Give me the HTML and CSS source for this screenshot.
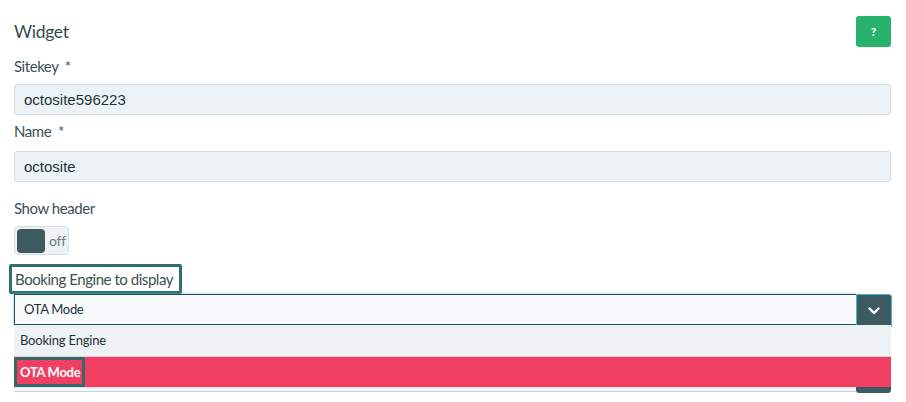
FILE: index.html
```html
<!DOCTYPE html>
<html>
<head>
<meta charset="utf-8">
<link rel="stylesheet" href="styles.css">
</head>
<body>
<div class="page">
  <div class="head">
    <h2 class="title">Widget</h2>
    <button class="help">?</button>
  </div>

  <div class="field f-site">
    <label class="label">Sitekey&nbsp; *</label>
    <div class="input">octosite596223</div>
  </div>

  <div class="field f-name">
    <label class="label">Name&nbsp; *</label>
    <div class="input">octosite</div>
  </div>

  <div class="field f-header">
    <label class="label">Show header</label>
    <div class="toggle"><span class="knob"></span><span class="toggle-text">off</span></div>
  </div>

  <div class="field f-engine">
    <label class="label focus-box">Booking Engine to display</label>
    <div class="select-wrap">
      <div class="select">
        <span class="select-value">OTA Mode</span>
        <span class="caret">
          <svg width="12" height="8" viewBox="0 0 12 8"><path d="M1.5 1.5 L6 6 L10.5 1.5" fill="none" stroke="#fff" stroke-width="2.4" stroke-linecap="round" stroke-linejoin="round"/></svg>
        </span>
      </div>
      <ul class="options">
        <li class="option">Booking Engine</li>
        <li class="option active"><span class="opt-focus">OTA Mode</span></li>
      </ul>
      <div class="peek"><span class="peek-line"></span><span class="peek-btn"></span></div>
    </div>
  </div>
</div>
</body>
</html>
```

FILE: styles.css
```css
* { box-sizing: border-box; }
html, body { margin: 0; padding: 0; background: #ffffff; }
body {
  font-family: "Lato", "Noto Sans", sans-serif;
  color: #3b4f55;
  width: 906px;
  height: 402px;
  overflow: hidden;
}
.page {
  padding: 16px 15px 0 14px;
}
.head {
  display: flex;
  justify-content: space-between;
  align-items: flex-start;
  height: 31px;
}
.title {
  margin: 5px 0 0 0;
  font-size: 17.5px;
  line-height: 22px;
  font-weight: 400;
  letter-spacing: -0.3px;
  color: #34494f;
}
.help {
  width: 35px;
  height: 31px;
  border: none;
  border-radius: 3px;
  background: #27b26e;
  color: #ffffff;
  font-family: "Lato", sans-serif;
  font-weight: 900;
  font-size: 11px;
  padding: 0;
  margin: 0;
}
.field { display: flex; flex-direction: column; }
.label {
  font-size: 15px;
  letter-spacing: -0.45px;
  line-height: 20px;
  color: #3b4f55;
}
.f-site { margin-top: 9px; }
.f-site .label { margin-bottom: 8px; }
.f-name { margin-top: 6px; }
.f-name .label { margin-bottom: 10px; }
.input {
  height: 31px;
  border: 1px solid #d3dce3;
  border-radius: 3px;
  background: #edf2f6;
  padding: 0 9px;
  font-family: "Liberation Sans", Arial, sans-serif;
  font-size: 15px;
  line-height: 29px;
  color: #1e3439;
}
.f-header { margin-top: 16px; }
.f-header .label { margin-bottom: 8px; }
.toggle {
  width: 55px;
  height: 29px;
  border: 1px solid #d5dde3;
  border-radius: 4px;
  background: #eef2f5;
  display: flex;
  align-items: center;
  padding: 0 2px;
}
.knob {
  width: 28px;
  height: 24px;
  border-radius: 4px;
  background: #3d5a61;
}
.toggle-text {
  margin-left: 4px;
  font-size: 14px;
  letter-spacing: -0.2px;
  color: #6a7d85;
}
.f-engine { margin-top: 9px; }
.focus-box {
  align-self: flex-start;
  margin-left: -5px;
  height: 30px;
  padding: 2px 6px 0 3px;
  border: 3px solid #2e7169;
  border-radius: 2px;
  line-height: 20px;
}
.select-wrap { width: 878px; }
.select {
  display: flex;
  height: 32px;
}
.select-value {
  flex: 1;
  height: 31px;
  border: 1px solid #1f4d59;
  border-right: none;
  box-shadow: 0 0 2px #5fc7ea;
  background: #f8fafc;
  padding: 0 9px;
  font-size: 13px;
  line-height: 29px;
  font-weight: 400;
  letter-spacing: -0.3px;
  color: #1e3338;
}
.caret {
  width: 36px;
  height: 33px;
  background: #3d5a61;
  border: 1px solid #41b7df;
  border-radius: 0 3px 0 0;
  display: flex;
  align-items: center;
  justify-content: center;
}
.options {
  list-style: none;
  margin: -1px 0 0 0;
  padding: 0;
  width: 877px;
  position: relative;
}
.option {
  height: 31px;
  padding: 0 6px;
  font-size: 13px;
  line-height: 31px;
  font-weight: 400;
  letter-spacing: -0.2px;
  color: #1e3338;
  background: #eef2f5;
}
.option.active {
  height: 31px;
  background: #f03f62;
  color: #ffffff;
  border-top: 1px solid #f6c9d3;
  padding: 0;
}
.opt-focus {
  display: inline-block;
  height: 30px;
  padding: 0 2px 0 3px;
  border: 3px solid #2f6b68;
  border-radius: 2px;
  line-height: 24px;
  font-size: 13px;
  font-weight: 700;
  letter-spacing: -0.3px;
}
.peek {
  display: flex;
  width: 877px;
  height: 6px;
}
.peek-line {
  flex: 1;
  background: #f4f5f7;
  border-top: 1px solid #e9dde2;
  border-bottom: 1px solid #c6d3dc;
  height: 5px;
}
.peek-btn {
  width: 35px;
  height: 6px;
  background: #3d5a61;
  border-radius: 0 0 3px 3px;
}
```
